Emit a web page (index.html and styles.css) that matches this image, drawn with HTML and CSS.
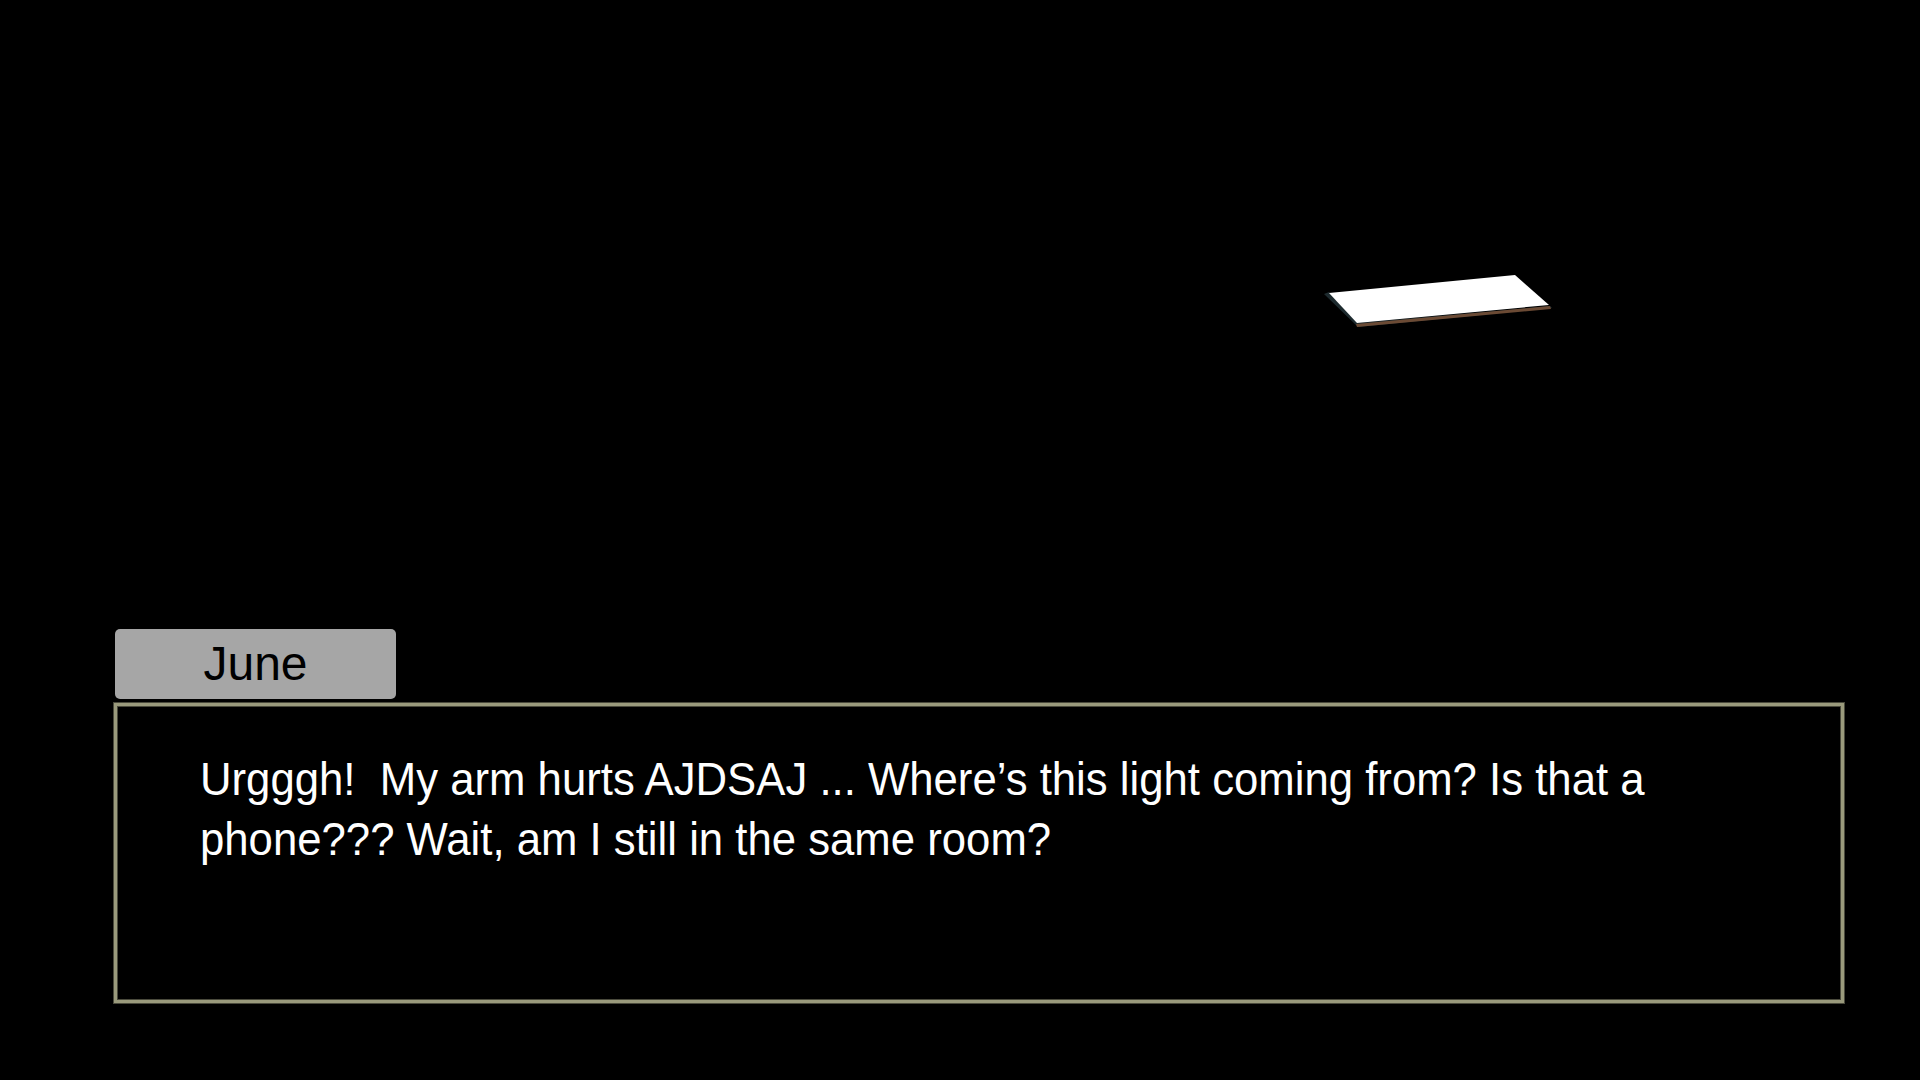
FILE: index.html
```html
<!DOCTYPE html>
<html lang="en">
<head>
<meta charset="utf-8">
<title>June</title>
<link rel="stylesheet" href="styles.css">
</head>
<body>
<main class="stage">
  <svg class="phone" width="240" height="62" viewBox="0 0 240 62" aria-hidden="true">
    <polygon points="4,24 9,22 38,53 230,36 232,38 38,57" fill="#1d2a2e"/>
    <polygon points="36,54 230,36 231,39 37,57" fill="#6b4a34"/>
    <polygon points="9,23 195,5 229,35 37,53" fill="#ffffff"/>
  </svg>
  <section class="dialogue">
    <div class="nametag">June</div>
    <div class="textbox">
      <p class="line">Urgggh!&nbsp; My arm hurts AJDSAJ ... Where’s this light coming from? Is that a phone??? Wait, am I still in the same room?</p>
    </div>
  </section>
</main>
</body>
</html>
```
FILE: styles.css
```css
html, body {
  margin: 0;
  padding: 0;
  background: #000;
}
.stage {
  width: 1920px;
  height: 1080px;
  position: relative;
  display: flex;
  flex-direction: column;
  justify-content: flex-end;
  box-sizing: border-box;
  padding: 0 76px 77px 114px;
  font-family: "Liberation Sans", Arial, sans-serif;
  overflow: hidden;
}
.phone {
  position: absolute;
  left: 1320px;
  top: 270px;
}
.dialogue {
  display: flex;
  flex-direction: column;
  align-items: flex-start;
}
.nametag {
  width: 281px;
  height: 70px;
  margin: 0 0 4px 1px;
  background: #a6a6a6;
  border-radius: 5px;
  color: #000;
  font-size: 48px;
  line-height: 70px;
  text-align: center;
}
.textbox {
  align-self: stretch;
  height: 300px;
  box-sizing: border-box;
  border: 3px solid #9a9a7c;
  box-shadow: 0 0 0 1px #4a4a3c, inset 0 0 0 1px #4a4a3c;
  padding: 43px 0 0 83px;
}
.line {
  margin: 0;
  color: #fff;
  font-size: 47px;
  line-height: 60px;
  width: 1640px;
  transform: scaleX(0.93);
  transform-origin: left top;
}
```
